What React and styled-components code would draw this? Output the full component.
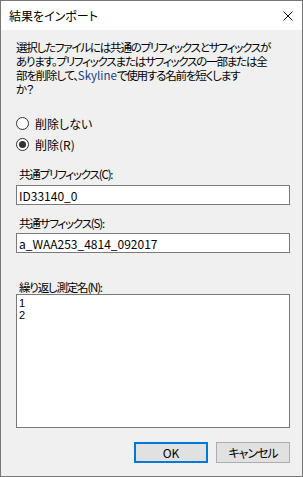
import styled, { createGlobalStyle } from 'styled-components';

const GlobalStyle = createGlobalStyle`
	html, body {
		margin: 0;
		padding: 0;
		background: #ffffff;
	}

	* {
		box-sizing: border-box;
	}
`;

const uiFont = `"Noto Sans CJK JP", "Noto Sans", sans-serif`;

// Yu Gothic UI has much narrower kana than Noto, so katakana-heavy text gets squeezed
const tight = `
	font-size: 11.5px;
	letter-spacing: -1.2px;
`;

const Window = styled.div`
	width: 303px;
	height: 477px;
	border: 1px solid #777777;
	display: flex;
	flex-direction: column;
	font-family: ${uiFont};
	font-size: 12px;
	font-feature-settings: "palt";
	color: #000000;
	overflow: hidden;
`;

const TitleBar = styled.div`
	height: 29px;
	flex: none;
	background: #ffffff;
	display: flex;
	align-items: center;
	justify-content: space-between;
	padding: 1px 9px 0 8px;
`;

const Title = styled.span`
	line-height: 14px;
`;

const CloseButton = styled.svg`
	width: 10px;
	height: 10px;
	margin-top: -1px;
`;

const Client = styled.div`
	flex: 1;
	background: #f0f0f0;
	display: flex;
	flex-direction: column;
	padding: 10px 12px 13px 15px;
`;

const Message = styled.p`
	margin: 0;
	line-height: 14px;
	white-space: nowrap;
	${tight}
`;

const Product = styled.span`
	color: #1c3a86;
	letter-spacing: 0;
`;

const RadioRow = styled.label`
	display: flex;
	align-items: center;
	height: 13px;
	margin-top: ${props => props.gap}px;
	line-height: 14px;
`;

const RadioCircle = styled.span`
	width: 13px;
	height: 13px;
	border: 1px solid #333333;
	border-radius: 50%;
	background: #ffffff;
	display: flex;
	align-items: center;
	justify-content: center;
	margin-right: 6px;
	flex: none;

	&::after {
		content: '';
		display: ${props => props.checked ? 'block' : 'none'};
		width: 7px;
		height: 7px;
		border-radius: 50%;
		background: #333333;
	}
`;

const FieldLabel = styled.div`
	line-height: 14px;
	padding-left: 3px;
	margin-top: ${props => props.top}px;
	margin-bottom: ${props => props.bottom}px;
	${tight}
`;

const TextBox = styled.input`
	display: block;
	width: 100%;
	height: 20px;
	border: 1px solid #7a7a7a;
	background: #ffffff;
	padding: 0 2px;
	font-family: ${uiFont};
	font-size: 12px;
	color: #000000;
	outline: none;
`;

const ListBox = styled.textarea`
	display: block;
	width: 100%;
	height: 134px;
	border: 1px solid #7a7a7a;
	background: #ffffff;
	padding: 2px 2px;
	margin: 0;
	font-family: "Liberation Sans", Arial, sans-serif;
	font-size: 11px;
	line-height: 12px;
	color: #000000;
	resize: none;
	outline: none;
	overflow: hidden;
`;

const ButtonRow = styled.div`
	display: flex;
	justify-content: flex-end;
	gap: 8px;
	margin-top: 14px;
`;

const Button = styled.button`
	width: 74px;
	height: 21px;
	background: #e1e1e1;
	border: ${props => props.primary ? '2px solid #0078d7' : '1px solid #adadad'};
	font-family: ${uiFont};
	font-size: 12px;
	font-feature-settings: "palt";
	letter-spacing: ${props => props.primary ? '0' : '-1px'};
	color: #000000;
	padding: 0;
	line-height: 14px;
`;

const App = () => {
	return (
		<>
			<GlobalStyle />
			<Window>
				<TitleBar>
					<Title>結果をインポート</Title>
					<CloseButton viewBox="0 0 10 10">
						<path d="M0.5 0.5 L9.5 9.5 M9.5 0.5 L0.5 9.5" stroke="#111" strokeWidth="1" fill="none" />
					</CloseButton>
				</TitleBar>
				<Client>
					<Message>
						選択したファイルには共通のプリフィックスとサフィックスが<br />
						あります。プリフィックスまたはサフィックスの一部または全<br />
						部を削除して、<Product>Skyline</Product>で使用する名前を短くします<br />
						か？
					</Message>
					<RadioRow gap={21}>
						<RadioCircle />
						削除しない
					</RadioRow>
					<RadioRow gap={8}>
						<RadioCircle checked />
						削除(R)
					</RadioRow>
					<FieldLabel top={16} bottom={4}>共通プリフィックス(C):</FieldLabel>
					<TextBox readOnly value="ID33140_0" />
					<FieldLabel top={11} bottom={3}>共通サフィックス(S):</FieldLabel>
					<TextBox readOnly value="a_WAA253_4814_092017" />
					<FieldLabel top={27} bottom={0}>繰り返し測定名(N):</FieldLabel>
					<ListBox readOnly value={'1\n2'} />
					<ButtonRow>
						<Button primary>OK</Button>
						<Button>キャンセル</Button>
					</ButtonRow>
				</Client>
			</Window>
		</>
	);
};

export default App;
